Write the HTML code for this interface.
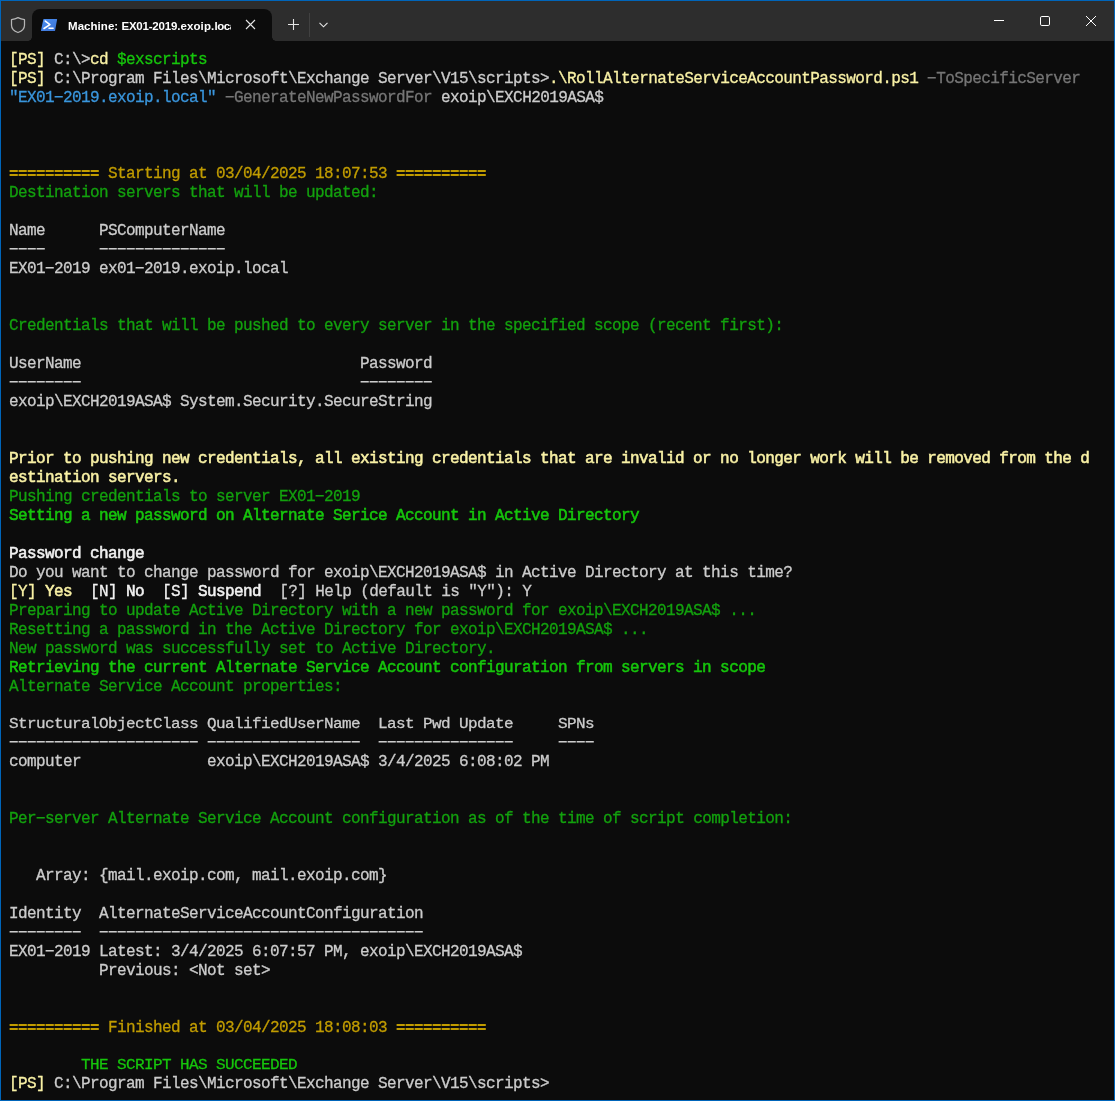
<!DOCTYPE html>
<html>
<head>
<meta charset="utf-8">
<title>Machine: EX01-2019.exoip.local</title>
<style>
html,body{margin:0;padding:0;}
body{width:1115px;height:1101px;background:#0c0c0c;overflow:hidden;position:relative;font-family:"Liberation Sans",sans-serif;}
#frame{position:absolute;left:0;top:0;width:1115px;height:1101px;box-sizing:border-box;border:1px solid #0065ba;z-index:10;pointer-events:none;}
#titlebar{position:absolute;left:1px;top:1px;width:1113px;height:40px;background:#2d2d2d;}
#tab{position:absolute;left:32px;top:9px;width:240px;height:32px;background:#0c0c0c;border-radius:8px 8px 0 0;}
.cc{position:absolute;top:37px;width:4px;height:4px;}
#ccl{left:28px;background:radial-gradient(circle at 0 0,rgba(12,12,12,0) 3.5px,#0c0c0c 4px);}
#ccr{left:272px;background:radial-gradient(circle at 100% 0,rgba(12,12,12,0) 3.5px,#0c0c0c 4px);}
#tabtitle{position:absolute;left:68px;top:18px;width:163px;height:16px;overflow:hidden;white-space:nowrap;color:#ffffff;font:bold 11.5px/16px "Liberation Sans",sans-serif;white-space:pre;will-change:transform;}
svg{position:absolute;overflow:visible;}
#sep{position:absolute;left:309px;top:13px;width:1px;height:24px;background:#414141;}
#term{--c:204,204,204;position:absolute;left:0;top:0;width:1115px;height:1101px;color:#cccccc;font-family:"Liberation Mono",monospace;font-size:16px;letter-spacing:-0.6px;will-change:transform;-webkit-text-stroke:0.3px;}
.r{position:absolute;left:9px;height:19px;line-height:19px;white-space:pre;}
.sq{transform:scaleY(0.91);transform-origin:0 13px;}
.b{-webkit-text-stroke:0.55px;}
i{display:inline-block;height:19px;vertical-align:top;}
i.d{width:9px;background:linear-gradient(90deg,rgba(var(--c),0.40) 0,rgba(var(--c),0.40) 1px,rgba(var(--c),1.00) 1px,rgba(var(--c),1.00) 8px,rgba(var(--c),0.80) 8px,rgba(var(--c),0.80) 9px) 0 7px/9px 1px repeat-x,linear-gradient(90deg,rgba(var(--c),0.22) 0,rgba(var(--c),0.22) 1px,rgba(var(--c),0.55) 1px,rgba(var(--c),0.55) 8px,rgba(var(--c),0.44) 8px,rgba(var(--c),0.44) 9px) 0 8px/9px 1px repeat-x;}
i.e{background:linear-gradient(90deg,rgba(var(--c),.4) 0,rgba(var(--c),.4) 1px,rgb(var(--c)) 1px,rgb(var(--c)) 8px,rgba(var(--c),.8) 8px,rgba(var(--c),.8) 9px) 0 5px/9px 2px repeat-x,linear-gradient(90deg,rgba(var(--c),.4) 0,rgba(var(--c),.4) 1px,rgb(var(--c)) 1px,rgb(var(--c)) 8px,rgba(var(--c),.8) 8px,rgba(var(--c),.8) 9px) 0 9px/9px 2px repeat-x;}
</style>
</head>
<body>
<div id="titlebar"></div>
<div id="tab"></div>
<div class="cc" id="ccl"></div>
<div class="cc" id="ccr"></div>
<!-- shield icon -->
<svg style="left:10px;top:16px" width="16" height="18" viewBox="0 0 16 18"><path d="M8 1.6 C10 2.6 12.2 3.3 14.5 3.7 V9.2 C14.5 12.6 11.8 15.1 8 16.5 C4.2 15.1 1.5 12.6 1.5 9.2 V3.7 C3.8 3.3 6 2.6 8 1.6 Z" fill="none" stroke="#b6b6b6" stroke-width="1.25" stroke-linejoin="round"/></svg>
<!-- powershell icon -->
<svg style="left:40px;top:18px" width="18" height="14" viewBox="0 0 18 14"><defs><linearGradient id="psg" x1="0" y1="0" x2="1" y2="1"><stop offset="0" stop-color="#4c90f2"/><stop offset="1" stop-color="#3b72d4"/></linearGradient></defs><path d="M3.9 1 H16.7 Q17.2 1 17.1 1.5 L15.1 12.5 Q15 13 14.5 13 H1.4 Q0.9 13 1 12.5 L3.3 1.5 Q3.4 1 3.9 1 Z" fill="url(#psg)"/><path d="M5.3 3.1 L9.9 6.7 L4 10.5" fill="none" stroke="#fff" stroke-width="1.6" stroke-linecap="round" stroke-linejoin="round"/><path d="M9 10.3 H13.1" stroke="#fff" stroke-width="1.5" stroke-linecap="round"/></svg>
<div id="tabtitle"><span style="letter-spacing:.05px">Machine: </span><span style="letter-spacing:-.25px">EX01-</span><span style="letter-spacing:-.12px">2019.</span><span style="letter-spacing:.13px">exoip.</span><span style="letter-spacing:-.4px">loc</span>al</div>
<!-- tab close -->
<svg style="left:245px;top:19px" width="11" height="11" viewBox="0 0 11 11"><path d="M1 1 L10 10 M10 1 L1 10" stroke="#e6e6e6" stroke-width="1.1" fill="none"/></svg>
<!-- plus -->
<svg style="left:288px;top:19px" width="11" height="11" viewBox="0 0 11 11"><path d="M5.5 0 V11 M0 5.5 H11" stroke="#e6e6e6" stroke-width="1.1" fill="none"/></svg>
<div id="sep"></div>
<!-- chevron -->
<svg style="left:318.5px;top:22px" width="9" height="6" viewBox="0 0 9 6"><path d="M0.5 0.8 L4.5 4.8 L8.5 0.8" stroke="#e6e6e6" stroke-width="1.1" fill="none"/></svg>
<!-- window controls -->
<svg style="left:994px;top:20px" width="10" height="1" viewBox="0 0 10 1"><rect x="0" y="0" width="10" height="1" fill="#ffffff"/></svg>
<svg style="left:1040px;top:16px" width="10" height="10" viewBox="0 0 10 10"><rect x="0.5" y="0.5" width="9" height="9" rx="1.3" fill="none" stroke="#ffffff" stroke-width="1"/></svg>
<svg style="left:1086px;top:16px" width="10" height="10" viewBox="0 0 10 10"><path d="M0 0 L10 10 M10 0 L0 10" stroke="#ffffff" stroke-width="1" fill="none"/></svg>
<div id="term">
<div class="r" style="top:51px"><span style="color:#F9F1A5;--c:249,241,165">[PS]</span> C:\&gt;<span style="color:#F9F1A5;--c:249,241,165">cd</span> <span style="color:#16C60C;--c:22,198,12">$exscripts</span></div>
<div class="r" style="top:70px"><span style="color:#F9F1A5;--c:249,241,165">[PS]</span> C:\Program Files\Microsoft\Exchange Server\V15\scripts&gt;<span style="color:#F9F1A5;--c:249,241,165">.\RollAlternateServiceAccountPassword.ps1</span><span style="color:#767676;--c:118,118,118"> <i class="d"></i>ToSpecificServer</span></div>
<div class="r" style="top:89px"><span style="color:#3A96DD;--c:58,150,221">"EX01<i class="d"></i>2019.exoip.local"</span><span style="color:#767676;--c:118,118,118"> <i class="d"></i>GenerateNewPasswordFor</span> exoip\EXCH2019ASA$</div>
<div class="r" style="top:165px"><i class="e" style="width:90px;--c:193,156,0"></i><span style="color:#C19C00;--c:193,156,0"> Starting at 03/04/2025 18:07:53 </span><i class="e" style="width:90px;--c:193,156,0"></i></div>
<div class="r" style="top:184px"><span style="color:#13A10E;--c:19,161,14">Destination servers that will be updated:</span></div>
<div class="r" style="top:222px">Name      PSComputerName</div>
<div class="r" style="top:241px"><i class="d" style="width:36px"></i>      <i class="d" style="width:126px"></i></div>
<div class="r" style="top:260px">EX01<i class="d"></i>2019 ex01<i class="d"></i>2019.exoip.local</div>
<div class="r" style="top:317px"><span style="color:#13A10E;--c:19,161,14">Credentials that will be pushed to every server in the specified scope (recent first):</span></div>
<div class="r" style="top:355px">UserName                               Password</div>
<div class="r" style="top:374px"><i class="d" style="width:72px"></i>                               <i class="d" style="width:72px"></i></div>
<div class="r" style="top:393px">exoip\EXCH2019ASA$ System.Security.SecureString</div>
<div class="r" style="top:450px"><span class="b" style="color:#F9F1A5;--c:249,241,165">Prior to pushing new credentials, all existing credentials that are invalid or no longer work will be removed from the d</span></div>
<div class="r" style="top:469px"><span class="b" style="color:#F9F1A5;--c:249,241,165">estination servers.</span></div>
<div class="r" style="top:488px"><span style="color:#13A10E;--c:19,161,14">Pushing credentials to server EX01<i class="d"></i>2019</span></div>
<div class="r" style="top:507px"><span class="b" style="color:#16C60C;--c:22,198,12">Setting a new password on Alternate Serice Account in Active Directory</span></div>
<div class="r" style="top:545px"><span class="b" style="color:#F2F2F2;--c:242,242,242">Password change</span></div>
<div class="r" style="top:564px">Do you want to change password for exoip\EXCH2019ASA$ in Active Directory at this time?</div>
<div class="r" style="top:583px"><span style="color:#F9F1A5;--c:249,241,165">[Y]</span><span class="b" style="color:#F9F1A5;--c:249,241,165"> Yes</span>  <span style="color:#F2F2F2;--c:242,242,242">[N]</span><span class="b" style="color:#F2F2F2;--c:242,242,242"> No</span>  <span style="color:#F2F2F2;--c:242,242,242">[S]</span><span class="b" style="color:#F2F2F2;--c:242,242,242"> Suspend</span>  [?] Help (default is "Y"): Y</div>
<div class="r" style="top:602px"><span style="color:#13A10E;--c:19,161,14">Preparing to update Active Directory with a new password for exoip\EXCH2019ASA$ ...</span></div>
<div class="r" style="top:621px"><span style="color:#13A10E;--c:19,161,14">Resetting a password in the Active Directory for exoip\EXCH2019ASA$ ...</span></div>
<div class="r" style="top:640px"><span style="color:#13A10E;--c:19,161,14">New password was successfully set to Active Directory.</span></div>
<div class="r" style="top:659px"><span class="b" style="color:#16C60C;--c:22,198,12">Retrieving the current Alternate Service Account configuration from servers in scope</span></div>
<div class="r" style="top:678px"><span style="color:#13A10E;--c:19,161,14">Alternate Service Account properties:</span></div>
<div class="r sq" style="top:715px">StructuralObjectClass QualifiedUserName  Last Pwd Update     SPNs</div>
<div class="r" style="top:734px"><i class="d" style="width:189px"></i> <i class="d" style="width:153px"></i>  <i class="d" style="width:135px"></i>     <i class="d" style="width:36px"></i></div>
<div class="r" style="top:753px">computer              exoip\EXCH2019ASA$ 3/4/2025 6:08:02 PM</div>
<div class="r" style="top:810px"><span style="color:#13A10E;--c:19,161,14">Per<i class="d"></i>server Alternate Service Account configuration as of the time of script completion:</span></div>
<div class="r" style="top:867px">   Array: {mail.exoip.com, mail.exoip.com}</div>
<div class="r" style="top:905px">Identity  AlternateServiceAccountConfiguration</div>
<div class="r" style="top:924px"><i class="d" style="width:72px"></i>  <i class="d" style="width:324px"></i></div>
<div class="r" style="top:943px">EX01<i class="d"></i>2019 Latest: 3/4/2025 6:07:57 PM, exoip\EXCH2019ASA$</div>
<div class="r" style="top:962px">          Previous: &lt;Not set&gt;</div>
<div class="r" style="top:1019px"><i class="e" style="width:90px;--c:193,156,0"></i><span style="color:#C19C00;--c:193,156,0"> Finished at 03/04/2025 18:08:03 </span><i class="e" style="width:90px;--c:193,156,0"></i></div>
<div class="r sq" style="top:1056px"><span style="color:#16C60C;--c:22,198,12">        THE SCRIPT HAS SUCCEEDED</span></div>
<div class="r" style="top:1075px"><span style="color:#F9F1A5;--c:249,241,165">[PS]</span> C:\Program Files\Microsoft\Exchange Server\V15\scripts&gt;</div>
</div>
<div id="frame"></div>
</body>
</html>
